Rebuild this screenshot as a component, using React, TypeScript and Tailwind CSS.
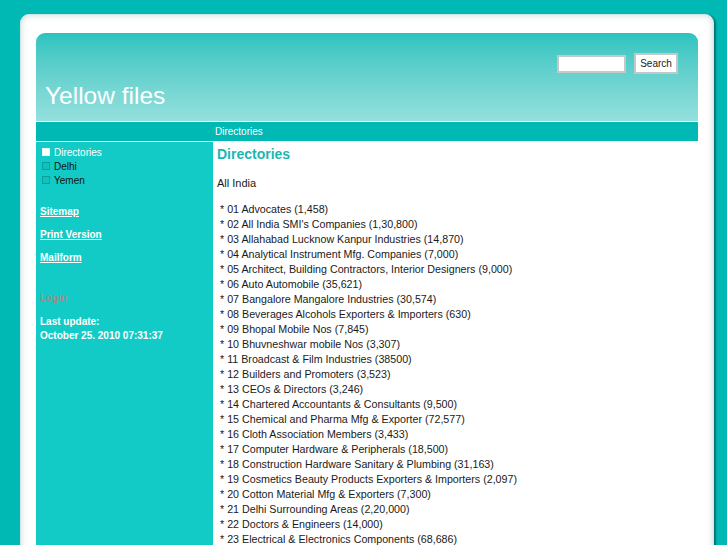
import React from 'react';

const directories = [
  '01 Advocates (1,458)',
  "02 All India SMI's Companies (1,30,800)",
  '03 Allahabad Lucknow Kanpur Industries (14,870)',
  '04 Analytical Instrument Mfg. Companies (7,000)',
  '05 Architect, Building Contractors, Interior Designers (9,000)',
  '06 Auto Automobile (35,621)',
  '07 Bangalore Mangalore Industries (30,574)',
  '08 Beverages Alcohols Exporters & Importers (630)',
  '09 Bhopal Mobile Nos (7,845)',
  '10 Bhuvneshwar mobile Nos (3,307)',
  '11 Broadcast & Film Industries (38500)',
  '12 Builders and Promoters (3,523)',
  '13 CEOs & Directors (3,246)',
  '14 Chartered Accountants & Consultants (9,500)',
  '15 Chemical and Pharma Mfg & Exporter (72,577)',
  '16 Cloth Association Members (3,433)',
  '17 Computer Hardware & Peripherals (18,500)',
  '18 Construction Hardware Sanitary & Plumbing (31,163)',
  '19 Cosmetics Beauty Products Exporters & Importers (2,097)',
  '20 Cotton Material Mfg & Exporters (7,300)',
  '21 Delhi Surrounding Areas (2,20,000)',
  '22 Doctors & Engineers (14,000)',
  '23 Electrical & Electronics Components (68,686)',
];

const menu = [
  { label: 'Directories', active: true },
  { label: 'Delhi', active: false },
  { label: 'Yemen', active: false },
];

export default function App() {
  return (
    <div className="h-[545px] overflow-hidden bg-[#00b9b5] pt-[14px] pl-[20px] font-['Liberation_Sans',Arial,sans-serif]">
      <div className="w-[694px] rounded-[9px] border border-[#d3e5e5] bg-white px-[15px] pt-[18px] pb-6 shadow-[inset_0_0_6px_rgba(0,80,80,0.22),2px_1px_2px_rgba(0,70,70,0.6)]">
        {/* Header */}
        <header className="h-[88px] rounded-t-[9px] bg-gradient-to-b from-[#29c4c0] to-[#93e0dd] flex flex-col">
          <div className="flex items-center justify-end gap-[8px] pt-[20px] pr-[20px]">
            <input
              type="text"
              className="h-[18px] w-[69px] border-2 border-[#c4c8c8] bg-white outline-none"
            />
            <button className="h-[21px] w-[44px] border-2 border-[#c4c8c8] bg-white text-[10px] text-[#222]">
              Search
            </button>
          </div>
          <h1 className="mt-[8px] pl-[9px] text-[24.5px] leading-[28px] text-white">Yellow files</h1>
        </header>

        {/* Nav */}
        <nav className="mt-[1px] h-[19px] bg-[#00b9b5] pl-[179px] text-[10px] leading-[19px] text-white">
          Directories
        </nav>

        <div className="mt-[1px] flex">
          {/* Sidebar */}
          <aside className="w-[177px] shrink-0 bg-[#13cbc6] pt-[3px] pl-[4px] min-h-[420px]">
            <ul>
              {menu.map((m) => (
                <li key={m.label} className="flex h-[14px] items-center gap-[4px] pl-[2px] text-[10px]">
                  <span
                    className={
                      m.active
                        ? 'h-[8px] w-[8px] border border-[#e8f4f4] bg-white'
                        : 'h-[8px] w-[8px] border border-[#0d9f9b] bg-[#10c2bd]'
                    }
                  />
                  <span className={m.active ? 'text-white' : 'text-[#111]'}>{m.label}</span>
                </li>
              ))}
            </ul>
            <div className="mt-[19px] flex flex-col gap-[11px] text-[10px] font-bold leading-[12px] text-white">
              <a href="#" className="underline">Sitemap</a>
              <a href="#" className="underline">Print Version</a>
              <a href="#" className="underline">Mailform</a>
            </div>
            <div className="mt-[28px] text-[10px] font-bold leading-[12px] text-[#a08c8c]">Login</div>
            <div className="mt-[11px] text-[10px] font-bold leading-[14px] text-white">
              <div>Last update:</div>
              <div>October 25. 2010 07:31:37</div>
            </div>
          </aside>

          {/* Content */}
          <main className="flex-1 pl-[4px] pt-[3px] text-[#1a1a1a]">
            <h2 className="text-[14px] font-bold leading-[18px] text-[#1cb6b2]">Directories</h2>
            <p className="mt-[13px] text-[11px] leading-[14px]">All India</p>
            <ul className="mt-[12px] pl-[3px] text-[10.7px] leading-[15px]">
              {directories.map((d) => (
                <li key={d}>* {d}</li>
              ))}
            </ul>
          </main>
        </div>
      </div>
    </div>
  );
}
